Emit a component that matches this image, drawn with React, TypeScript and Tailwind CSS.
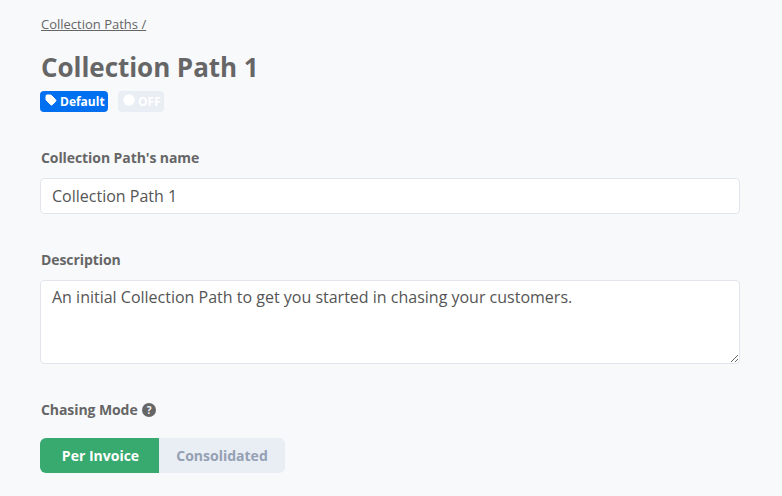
import { Tag, Circle } from "lucide-react";

export default function App() {
  return (
    <div className="h-[496px] w-[782px] overflow-hidden bg-[#f8f9fb] px-10 pt-[15px] text-[#666] font-['Open_Sans',sans-serif]">
      <a className="block pl-px text-[13px] leading-[18px] underline">Collection Paths /</a>
      <h1 className="mt-[16px] pl-px text-[26px] leading-[36px] font-bold tracking-[-0.05px]">Collection Path 1</h1>
      <div className="mt-[6px] flex gap-[10px] text-[12px] leading-[21px] font-bold text-white">
        <span className="flex h-[21px] w-[68px] items-center gap-[3px] rounded-[4px] bg-[#0070f0] pl-[5px]">
          <Tag className="h-[12px] w-[12px] fill-white -mt-[3px]" strokeWidth={2} />
          Default
        </span>
        <span className="flex h-[21px] w-[46px] items-center gap-[2px] rounded-[4px] bg-[#e9edf4] pl-[4px]">
          <Circle className="h-[14px] w-[14px] fill-white -mt-[3px]" strokeWidth={0} />
          OFF
        </span>
      </div>

      <label className="mt-[36px] block pl-px text-[14px] leading-[20px] font-bold tracking-[-0.08px]">Collection Path's name</label>
      <input
        readOnly
        value="Collection Path 1"
        className="mt-[10px] block h-9 w-[700px] rounded-[4px] border border-[#e2e6ec] bg-white px-[11px] text-[16px] text-[#555] outline-none"
      />

      <label className="mt-[36px] block pl-px text-[14px] leading-[20px] font-bold tracking-[-0.08px]">Description</label>
      <textarea
        readOnly
        value="An initial Collection Path to get you started in chasing your customers."
        className="mt-[10px] block h-[84px] w-[700px] rounded-[4px] border border-[#e2e6ec] bg-white px-[11px] py-[4px] text-[16px] leading-[24px] text-[#555] outline-none"
      />

      <div className="mt-[36px] flex items-center gap-[4px] pl-px text-[14px] leading-[20px] font-bold tracking-[-0.08px]">
        Chasing Mode
        <svg viewBox="0 0 14 14" className="h-[14px] w-[14px]">
          <circle cx="7" cy="7" r="7" fill="#666" />
          <text x="7" y="10.5" textAnchor="middle" fontSize="10" fontWeight="700" fill="#f8f9fb">?</text>
        </svg>
      </div>
      <div className="mt-[18px] flex h-[35px] w-[245px] text-[14px] font-bold">
        <span className="flex w-[119px] items-center justify-center rounded-l-[6px] bg-[#38a96f] pl-[2px] text-white">Per Invoice</span>
        <span className="flex flex-1 items-center justify-center rounded-r-[6px] bg-[#e9edf4] text-[#94a0b3]">Consolidated</span>
      </div>
    </div>
  );
}
